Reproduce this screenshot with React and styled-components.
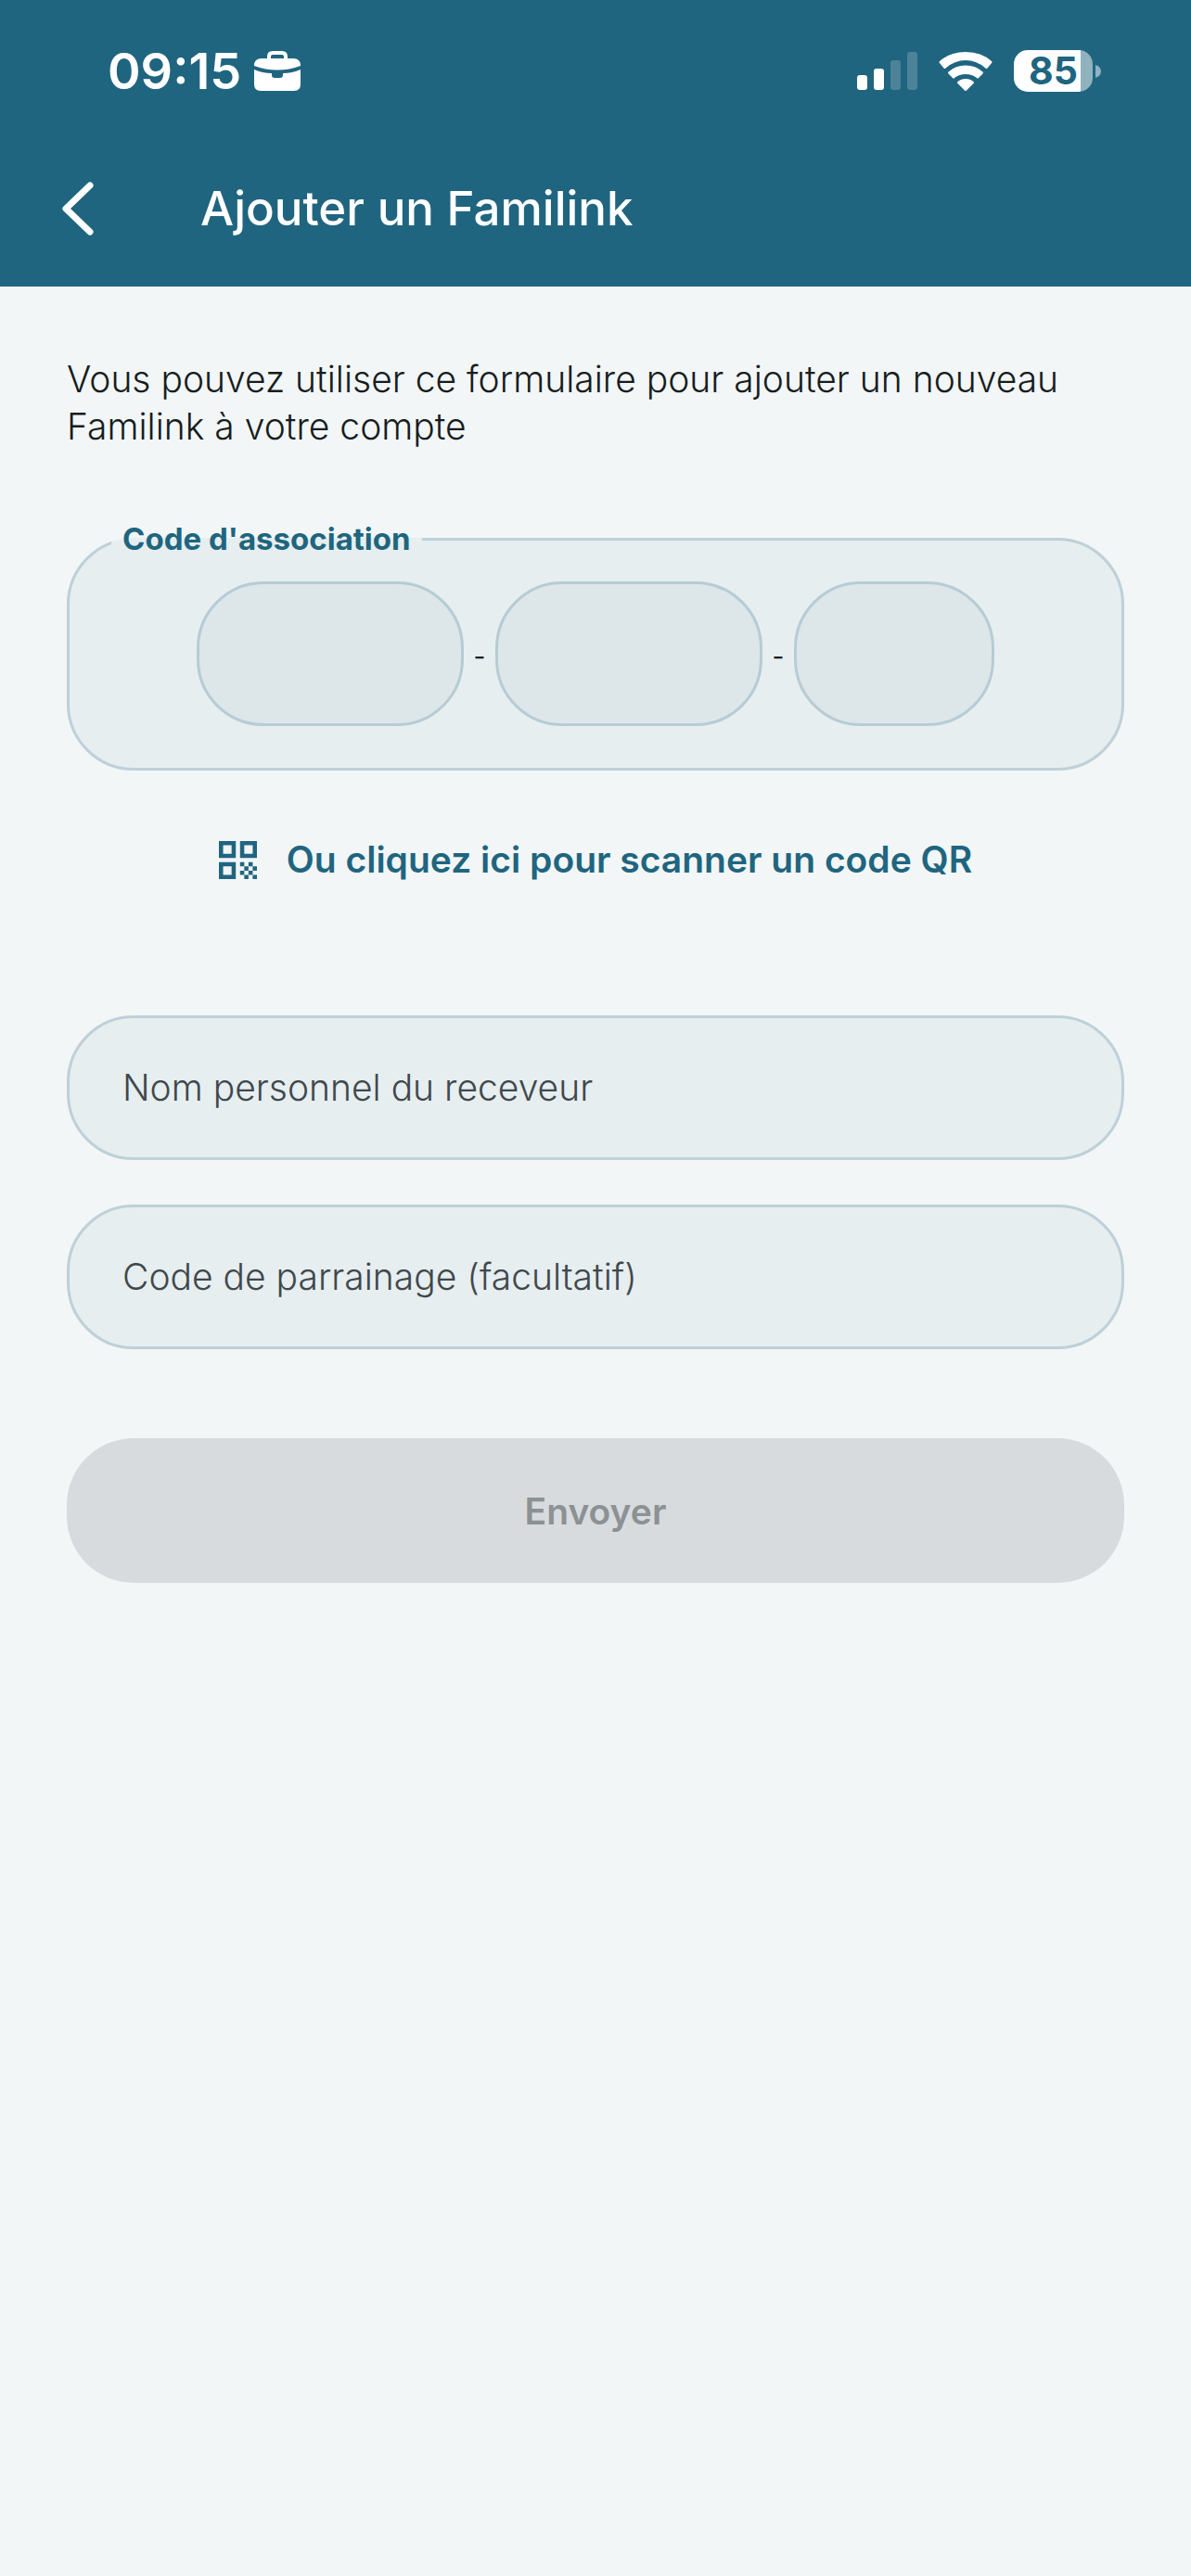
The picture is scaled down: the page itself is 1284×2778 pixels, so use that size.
import React from "react";
import styled, { createGlobalStyle } from "styled-components";

const color = {
  primary: "#20657f",
  page: "#f2f6f7",
  panel: "#e6eef0",
  panelLine: "#bed0d8",
  cell: "#dde6e9",
  cellLine: "#b6ccd5",
  text: "#171d1e",
  muted: "#40484c",
  disabled: "#d7dbde",
  disabledText: "#8c9194",
};

const GlobalStyle = createGlobalStyle`
  *, *::before, *::after { box-sizing: border-box; }
  body {
    margin: 0;
    background: ${color.page};
    color: ${color.text};
    font-family: Inter, "Liberation Sans", sans-serif;
  }
  button, input { font: inherit; color: inherit; }
`;

const Header = styled.header`
  background: ${color.primary};
  color: #fff;
`;

const StatusBar = styled.div`
  display: flex;
  align-items: center;
  justify-content: space-between;
  height: 153px;
  padding: 0 97px 0 116px;
`;

const StatusGroup = styled.div`
  display: flex;
  align-items: center;
  gap: ${(p) => p.$gap}px;
`;

const Clock = styled.time`
  font-size: 54px;
  font-weight: 600;
  line-height: 64px;
`;

const Battery = styled.div`
  display: flex;
  align-items: center;
  gap: 3px;
`;

const BatteryLevel = styled.span`
  width: 85px;
  height: 45px;
  border-radius: 15px;
  background: linear-gradient(to right, #fff 85%, #90b2bf 85%);
  color: ${color.primary};
  font-size: 41px;
  font-weight: 700;
  line-height: 45px;
  text-align: center;
`;

const TitleBar = styled.div`
  display: flex;
  align-items: center;
  gap: 96px;
  height: 156px;
  padding: 0 48px 12px;
`;

const BackButton = styled.button`
  display: grid;
  place-items: center;
  width: 72px;
  height: 96px;
  padding: 0;
  border: 0;
  background: none;
`;

const Title = styled.h1`
  margin: 0;
  font-size: 51px;
  font-weight: 500;
  line-height: 60px;
`;

const Content = styled.main`
  display: flex;
  flex-direction: column;
  padding: 74px 72px 72px;
`;

const Intro = styled.p`
  max-width: 1092px;
  margin: 0;
  font-size: 39px;
  font-weight: 300;
  line-height: 51px;
`;

const Form = styled.form`
  display: flex;
  flex-direction: column;
  gap: 48px;
  padding-top: 78px;
`;

const CodeGroup = styled.fieldset`
  min-width: 0;
  margin: 0;
  padding: 28px 45px 45px;
  border: 3px solid ${color.panelLine};
  border-radius: 72px;
  background: ${color.panel};
`;

const CodeLegend = styled.legend`
  padding: 0 12px;
  color: ${color.primary};
  font-size: 33px;
  font-weight: 700;
  line-height: 36px;
`;

const CodeRow = styled.div`
  display: flex;
  align-items: center;
  justify-content: center;
`;

const CodeInput = styled.input`
  width: ${(p) => p.$width}px;
  height: 156px;
  padding: 0 24px;
  border: 3px solid ${color.cellLine};
  border-radius: 72px;
  background: ${color.cell};
  font-size: 39px;
  text-align: center;
`;

const Dash = styled.span`
  width: 34px;
  padding-top: 6px;
  font-size: 28px;
  line-height: 36px;
  text-align: center;
`;

const ScanButton = styled.button`
  display: flex;
  align-items: center;
  align-self: center;
  gap: 32px;
  height: 96px;
  margin-bottom: 72px;
  padding: 0;
  border: 0;
  background: none;
  color: ${color.primary};
  font-size: 39px;
  font-weight: 600;
  line-height: 48px;
`;

const Field = styled.div`
  display: grid;
  align-items: center;
  > * { grid-area: 1 / 1; }
`;

const FieldInput = styled.input`
  width: 100%;
  height: 156px;
  padding: 0 60px;
  border: 3px solid ${color.panelLine};
  border-radius: 72px;
  background: ${color.panel};
  font-size: 39px;
  &:not(:placeholder-shown) + label { visibility: hidden; }
`;

const FieldLabel = styled.label`
  justify-self: start;
  padding-left: 60px;
  color: ${color.muted};
  font-size: 39px;
  font-weight: 300;
  line-height: 48px;
  pointer-events: none;
`;

const SubmitButton = styled.button`
  height: 156px;
  margin-top: 48px;
  border: 0;
  border-radius: 72px;
  background: ${color.disabled};
  font-size: 39px;
  font-weight: 600;
  &:disabled { color: ${color.disabledText}; }
`;

function BriefcaseIcon() {
  return (
    <svg width="50" height="43" viewBox="0 0 50 43" fill="#fff" aria-hidden="true">
      <path
        fillRule="evenodd"
        d="M14 8V6q0-6 6-6h10q6 0 6 6v2h6q8 0 8 8Q25 25 0 16q0-8 8-8zM18 8h14V6q0-2-2-2H20q-2 0-2 2z"
      />
      <path d="M0 20q9 4 19 4v2q0 3 3 3h6q3 0 3-3v-2q10 0 19-4v16q0 7-7 7H7q-7 0-7-7z" />
    </svg>
  );
}

function SignalIcon() {
  return (
    <svg width="65" height="42" viewBox="0 0 65 42" fill="#fff" aria-hidden="true">
      <rect x="0" y="25" width="11" height="16" rx="3" />
      <rect x="18" y="18" width="11" height="23" rx="3" />
      <rect x="36" y="9" width="11" height="32" rx="3" opacity="0.2" />
      <rect x="54" y="0" width="11" height="41" rx="3" opacity="0.2" />
    </svg>
  );
}

function WifiIcon() {
  return (
    <svg width="58" height="42" viewBox="0 0 58 42" fill="#fff" aria-hidden="true">
      <path d="M1 12q-1-1 0-2Q12 0 29 0t28 10q1 1 0 2l-4.500 5.500q-1 1-2 0Q41 9 29 9T7.500 17.500q-1 1-2 0z" />
      <path d="M10.500 23.500q-1-1 0-2Q18 14.500 29 14.500t18.500 7q1 1 0 2L43 28q-1 1-2 0-5-4-12-4t-12 4q-1 1-2 0z" />
      <path d="M20.500 34q-1-1 0-2Q24 29 29 29t8.500 3q1 1 0 2l-7.500 7.500q-1 1-2 0z" />
    </svg>
  );
}

function QrIcon() {
  return (
    <svg width="41" height="41" viewBox="0 0 9 9" fill="currentColor" aria-hidden="true">
      <path
        fillRule="evenodd"
        d="M0 0h4v4H0zM1 1v2h2V1zM5 0h4v4H5zM6 1v2h2V1zM0 5h4v4H0zM1 6v2h2V6z"
      />
      <path d="M5 5h1v1H5zM7 5h1v1H7zM6 6h1v1H6zM8 6h1v1H8zM5 7h1v1H5zM7 7h1v1H7zM6 8h1v1H6zM8 8h1v1H8z" />
    </svg>
  );
}

const fields = [
  { id: "receiver-name", label: "Nom personnel du receveur" },
  { id: "referral-code", label: "Code de parrainage (facultatif)" },
];

export default function App() {
  return (
    <>
      <GlobalStyle />
      <Header>
        <StatusBar>
          <StatusGroup $gap={14}>
            <Clock>09:15</Clock>
            <BriefcaseIcon />
          </StatusGroup>
          <StatusGroup $gap={23}>
            <SignalIcon />
            <WifiIcon />
            <Battery>
              <BatteryLevel>85</BatteryLevel>
              <svg width="6" height="14" viewBox="0 0 6 14" fill="#90b2bf" aria-hidden="true">
                <path d="M0 0q6 2 6 7t-6 7z" />
              </svg>
            </Battery>
          </StatusGroup>
        </StatusBar>
        <TitleBar>
          <BackButton type="button" aria-label="Retour">
            <svg width="34" height="58" viewBox="0 0 34 58" fill="none" aria-hidden="true">
              <path d="M30 4 4 29l26 25" stroke="#fff" strokeWidth="7" strokeLinecap="round" strokeLinejoin="round" />
            </svg>
          </BackButton>
          <Title>Ajouter un Familink</Title>
        </TitleBar>
      </Header>
      <Content>
        <Intro>
          Vous pouvez utiliser ce formulaire pour ajouter un nouveau Familink à votre compte
        </Intro>
        <Form>
          <CodeGroup>
            <CodeLegend>Code d'association</CodeLegend>
            <CodeRow>
              <CodeInput $width={288} aria-label="Code, partie 1" />
              <Dash>-</Dash>
              <CodeInput $width={288} aria-label="Code, partie 2" />
              <Dash>-</Dash>
              <CodeInput $width={216} aria-label="Code, partie 3" />
            </CodeRow>
          </CodeGroup>
          <ScanButton type="button">
            <QrIcon />
            Ou cliquez ici pour scanner un code QR
          </ScanButton>
          {fields.map((field) => (
            <Field key={field.id}>
              <FieldInput id={field.id} placeholder=" " />
              <FieldLabel htmlFor={field.id}>{field.label}</FieldLabel>
            </Field>
          ))}
          <SubmitButton type="submit" disabled>
            Envoyer
          </SubmitButton>
        </Form>
      </Content>
    </>
  );
}
